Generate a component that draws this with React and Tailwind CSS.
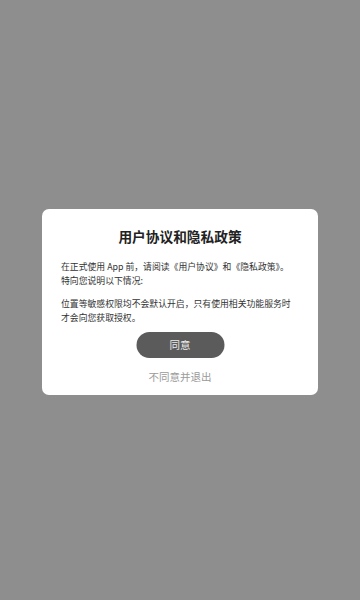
export default function App() {
  const font = { fontFamily: '"Noto Sans CJK SC", "Noto Sans", sans-serif' };

  return (
    <div
      className="w-[360px] h-[600px] pt-[4px] bg-[#8e8e8e] flex items-center justify-center"
      style={font}
    >
      <div className="w-[276px] bg-white rounded-[7px] pt-[17px] pb-[10px] pl-[19px] pr-[14px] flex flex-col">
        <h1 className="text-center text-[13.7px] leading-[20px] font-bold text-[#222] pr-[5px]">
          用户协议和隐私政策
        </h1>

        {/* body copy is drawn at 12px and scaled down, small sizes get clamped */}
        <div className="mt-[14px] h-[27px]">
          <p className="w-[340px] origin-top-left scale-[0.736] text-[12px] leading-[18.3px] text-[#333] whitespace-nowrap">
            在正式使用 App 前，请阅读《用户协议》和《隐私政策》。
            <br />
            特向您说明以下情况:
          </p>
        </div>

        <div className="mt-[9.5px] h-[27px]">
          <p className="w-[340px] origin-top-left scale-[0.736] text-[12px] leading-[18.3px] text-[#333] whitespace-nowrap">
            位置等敏感权限均不会默认开启，只有使用相关功能服务时
            <br />
            才会向您获取授权。
          </p>
        </div>

        <button className="mt-[8px] self-center -translate-x-[2.5px] w-[88px] h-[26px] rounded-full bg-[#5b5b5b] text-[#ececec] text-[10.5px]">
          同意
        </button>

        <button className="mt-[11px] self-center -translate-x-[2.5px] text-[10.5px] leading-[16px] text-[#9a9a9a]">
          不同意并退出
        </button>
      </div>
    </div>
  );
}
